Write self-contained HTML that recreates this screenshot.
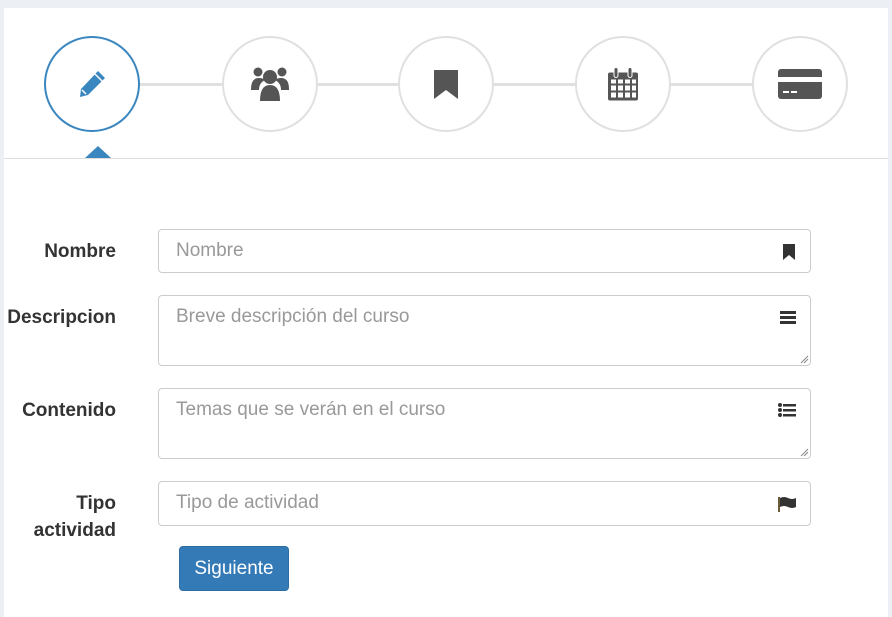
<!DOCTYPE html>
<html><head><style>
body{margin:0;background:#eceff3;font-family:"Liberation Sans",sans-serif;}
#p{position:absolute;left:4px;top:8px;width:884px;height:609px;background:#fff;}
.c{position:absolute;top:36px;width:96px;height:96px;border:2px solid #e0e0e0;border-radius:50%;background:#fff;box-sizing:border-box;}
.c svg{position:absolute;left:50%;top:50%;transform:translate(-50%,-50%);}
.line{position:absolute;top:83px;height:3px;background:#e0e0e0;}
.hr{position:absolute;left:4px;top:158px;width:884px;height:1px;background:#ddd;}
.lbl{position:absolute;right:776px;font-weight:bold;font-size:19px;color:#333;text-align:right;line-height:27px;}
.in{position:absolute;left:158px;width:653px;border:1px solid #ccc;border-radius:4px;box-sizing:border-box;font-size:19px;color:#999;padding:10px 17px;background:#fff;}
.in svg.i{position:absolute;right:14px;top:14px;}
.rs{position:absolute;right:1px;bottom:1px;}
.btn{position:absolute;left:179px;top:546px;width:110px;height:45px;background:#337ab7;border:1px solid #2e6da4;border-radius:4px;box-sizing:border-box;color:#fff;font-size:19px;text-align:center;line-height:43px;}
</style></head><body>
<div id="p"></div>
<div class="line" style="left:130px;width:640px"></div>
<div class="c" style="left:44px;border-color:#3a87c0"><svg width="32" height="32" viewBox="0 0 32 32"><path d="M22 3l7 7L12 27l-8 2 1-8z" fill="#3a87c0"/><path d="M19 6l7 7" stroke="#fff" stroke-width="1.5"/><path d="M6 22l4 4" stroke="#fff" stroke-width="1.5"/></svg></div>
<div class="c" style="left:222px"><svg width="38" height="36" viewBox="0 0 38 36"><circle cx="7" cy="6" r="4.5" fill="#555"/><circle cx="31" cy="6" r="4.5" fill="#555"/><circle cx="19" cy="11" r="7" fill="#555"/><path d="M0 23q0-11 8-11q4 0 6 2q-6 3-6 10H0z M38 23q0-11-8-11q-4 0-6 2q6 3 6 10h8z M9 35q0-16 10-16q10 0 10 16z" fill="#555"/></svg></div>
<div class="c" style="left:398px"><svg width="26" height="30" viewBox="0 0 26 30"><path d="M1 1h24v29l-12-9-12 9z" fill="#555"/></svg></div>
<div class="c" style="left:575px"><svg width="32" height="35" viewBox="0 0 32 35"><rect x="1" y="6" width="30" height="28" rx="2" fill="#555"/><g fill="#fff"><rect x="4" y="13" width="5" height="4"/><rect x="11" y="13" width="5" height="4"/><rect x="18" y="13" width="5" height="4"/><rect x="25" y="13" width="4" height="4"/><rect x="4" y="19" width="5" height="5"/><rect x="11" y="19" width="5" height="5"/><rect x="18" y="19" width="5" height="5"/><rect x="25" y="19" width="4" height="5"/><rect x="4" y="26" width="5" height="5"/><rect x="11" y="26" width="5" height="5"/><rect x="18" y="26" width="5" height="5"/><rect x="25" y="26" width="4" height="5"/></g><rect x="7" y="1" width="4" height="10" rx="2" fill="#555" stroke="#fff"/><rect x="21" y="1" width="4" height="10" rx="2" fill="#555" stroke="#fff"/></svg></div>
<div class="c" style="left:752px"><svg width="44" height="30" viewBox="0 0 44 30"><rect x="0" y="0" width="44" height="30" rx="3" fill="#555"/><rect x="0" y="8" width="44" height="5" fill="#fff"/><rect x="5" y="22" width="6" height="2" fill="#fff"/><rect x="13" y="22" width="6" height="2" fill="#fff"/></svg></div>
<div style="position:absolute;left:85px;top:146px;width:0;height:0;border-left:13px solid transparent;border-right:13px solid transparent;border-bottom:12px solid #3a87c0"></div>
<div class="hr"></div>
<div class="lbl" style="top:238px">Nombre</div>
<div class="lbl" style="top:304px">Descripcion</div>
<div class="lbl" style="top:397px">Contenido</div>
<div class="lbl" style="top:490px">Tipo<br>actividad</div>
<div class="in" style="top:229px;height:44px">Nombre<svg class="i" width="14" height="16" viewBox="0 0 14 16"><path d="M1 0h12v16l-6-5-6 5z" fill="#333"/></svg></div>
<div class="in" style="top:295px;height:71px">Breve descripción del curso<svg class="i" width="16" height="14" viewBox="0 0 16 14"><rect y="1" width="16" height="3" fill="#333"/><rect y="6" width="16" height="3" fill="#333"/><rect y="11" width="16" height="3" fill="#333"/></svg><svg class="rs" width="9" height="9" viewBox="0 0 9 9"><path d="M1 8L8 1M4 8L8 4" stroke="#888" stroke-width="1"/></svg></div>
<div class="in" style="top:388px;height:71px">Temas que se verán en el curso<svg class="i" width="18" height="14" viewBox="0 0 18 14"><circle cx="2" cy="2" r="2" fill="#333"/><circle cx="2" cy="7" r="2" fill="#333"/><circle cx="2" cy="12" r="2" fill="#333"/><rect x="5" y="1" width="13" height="2.5" fill="#333"/><rect x="5" y="6" width="13" height="2.5" fill="#333"/><rect x="5" y="11" width="13" height="2.5" fill="#333"/></svg><svg class="rs" width="9" height="9" viewBox="0 0 9 9"><path d="M1 8L8 1M4 8L8 4" stroke="#888" stroke-width="1"/></svg></div>
<div class="in" style="top:481px;height:45px">Tipo de actividad<svg class="i" width="18" height="16" viewBox="0 0 18 16"><rect x="0" y="1" width="2" height="15" fill="#6a5a3a"/><path d="M2 2q4-2 8 0t8 0v9q-4 2-8 0t-8 0z" fill="#333"/></svg></div>
<div class="btn">Siguiente</div>
</body></html>
